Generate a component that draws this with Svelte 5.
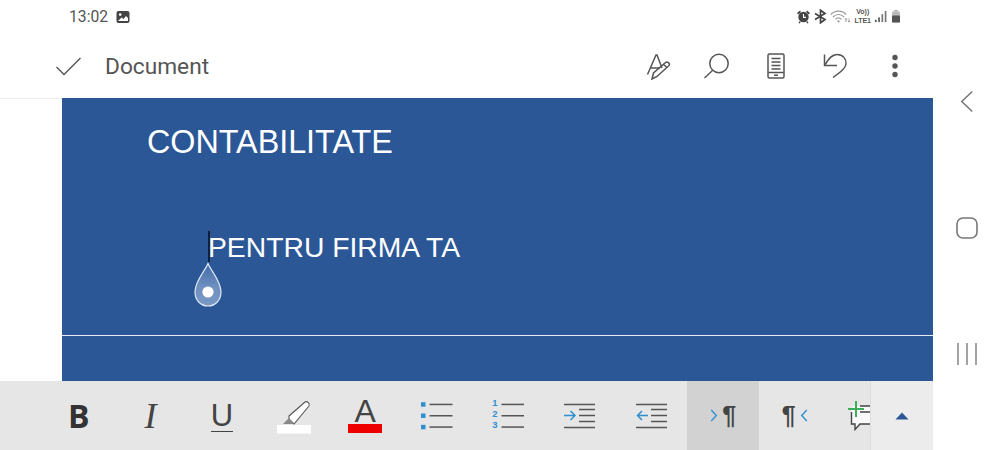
<script lang="ts">
	const lines = [0, 1, 2];
</script>

<div class="screen">
	<div class="main">
		<div class="status">
			<span class="time">13:02</span>
			<svg class="pic" width="14" height="14" viewBox="0 0 14 14">
				<rect x="0.5" y="1" width="13" height="12" rx="2" fill="#444" />
				<circle cx="4.2" cy="4.6" r="1.3" fill="#fff" />
				<path d="M2 11 L5.5 7.5 L7.5 9 L10 6 L12 8 V11 Z" fill="#fff" />
			</svg>
			<div class="sys">
				<svg width="15" height="15" viewBox="0 0 15 15" fill="#444">
					<circle cx="7.5" cy="8" r="5.2" />
					<path d="M1 4 L4 1.5 L5 3 L2.2 5.4 Z M14 4 L11 1.5 L10 3 L12.8 5.4 Z M3.5 12.2 L2.5 14 L3.6 14.4 L5 12.8 Z M11.5 12.2 L12.5 14 L11.4 14.4 L10 12.8 Z" />
					<path d="M7.5 5 V8.4 H10" stroke="#fff" stroke-width="1.1" fill="none" />
				</svg>
				<svg width="13" height="15" viewBox="0 0 13 15" fill="none" stroke="#444" stroke-width="1.7">
					<path d="M1 4.5 L11 10.5 L6.5 13.8 V1.2 L11 4.5 L1 10.5" />
				</svg>
				<svg class="wifi" width="21" height="15" viewBox="0 0 21 15" fill="none" stroke="#999" stroke-width="1.1">
					<path d="M0.8 5.5 C5 1 12 1 16.2 5.5 M3 8 C6.2 4.6 10.8 4.6 14 8 M5.4 10.4 C7.2 8.6 9.8 8.6 11.6 10.4" />
					<circle cx="8.5" cy="12.4" r="1.1" fill="#999" stroke="none" />
					<path d="M16 13 V9.5 M14.8 10.6 L16 9.4 L17.2 10.6 M19 9.5 V13 M17.9 12 L19 13.1 L20.1 12" stroke="#888" stroke-width="0.8" />
				</svg>
				<span class="volte"><span>Vo))</span><span>LTE1</span></span>
				<svg width="14" height="15" viewBox="0 0 15 15" fill="#555">
					<rect x="1" y="11" width="1.8" height="2.5" />
					<rect x="4.5" y="8.5" width="1.8" height="5" />
					<rect x="8" y="5" width="1.8" height="8.5" fill="#777" />
					<rect x="11.5" y="1.5" width="1.8" height="12" fill="#777" />
				</svg>
				<svg width="10" height="15" viewBox="0 0 10 15">
					<rect x="3.2" y="1" width="3.6" height="1.5" fill="#aaa" />
					<rect x="1" y="2.5" width="8" height="11" rx="1" fill="#bbb" />
					<rect x="1" y="6.5" width="8" height="7" rx="0.8" fill="#555" />
				</svg>
			</div>
		</div>

		<header class="appbar">
			<svg class="check" width="28" height="20" viewBox="0 0 28 20" fill="none" stroke="#555" stroke-width="1.4">
				<path d="M1.5 11 L9 18.5 L25.5 2" />
			</svg>
			<span class="doc-title">Document</span>
			<div class="actions">
				<span class="action">
					<svg width="28" height="28" viewBox="-1 0 28 28" fill="none" stroke="#555" stroke-width="1.5">
						<path d="M3.5 22.5 L12 3 H13 L18 16 M6.5 16 H16" />
						<path d="M8 27 L9.5 21 L21.5 10.5 C23 9 26.5 11.5 25 13.5 L13 24.5 Z M19.5 12.5 L23 15.5" />
					</svg>
				</span>
				<span class="action">
					<svg width="26" height="26" viewBox="1 0 26 26" fill="none" stroke="#555" stroke-width="1.5">
						<circle cx="16" cy="10.5" r="9.2" />
						<path d="M9.5 17.5 L1.5 25" />
					</svg>
				</span>
				<span class="action">
					<svg width="18" height="26" viewBox="0 0 18 26" fill="none" stroke="#555" stroke-width="1.5">
						<rect x="1" y="1" width="16" height="24" rx="1.5" />
						<path d="M4.5 5.5 H13.5 M4.5 9 H13.5 M4.5 12.5 H13.5 M4.5 16 H13.5 M1 19.5 H17 M7 22.3 H11" />
					</svg>
				</span>
				<span class="action">
					<svg width="26" height="26" viewBox="1 0 26 26" fill="none" stroke="#555" stroke-width="1.5">
						<path d="M2.5 1.5 V12.5 H15 M3 12 C7 5 10 1.5 15 1.5 C21 1.5 24.5 6 24 11 C23.5 15 20 18 11 24.5" />
					</svg>
				</span>
				<span class="action">
					<svg width="8" height="26" viewBox="0 0 8 26" fill="#555">
						<circle cx="4" cy="4.5" r="2.7" />
						<circle cx="4" cy="13" r="2.7" />
						<circle cx="4" cy="21.5" r="2.7" />
					</svg>
				</span>
			</div>
		</header>

		<div class="canvas">
			<div class="page">
				<div class="cover">
					<p class="heading">CONTABILITATE</p>
					<p class="sub">PENTRU FIRMA TA</p>
					<span class="caret"></span>
					<svg class="handle" width="30" height="46" viewBox="0 0 30 46">
						<defs>
							<linearGradient id="drop" x1="0" y1="0" x2="0" y2="1">
								<stop offset="0" stop-color="#3f69a6" />
								<stop offset="0.55" stop-color="#6f90c0" />
								<stop offset="1" stop-color="#7a98c6" />
							</linearGradient>
						</defs>
						<path d="M15 1.5 C12 9 2 19 2 30 C2 38 7.5 44 15 44 C22.5 44 28 38 28 30 C28 19 18 9 15 1.5 Z" fill="url(#drop)" stroke="#dfe8f5" stroke-width="1.2" />
						<circle cx="15" cy="30" r="5.6" fill="#fff" />
					</svg>
				</div>
			</div>
		</div>

		<div class="toolbar">
			<div class="tools">
				<button class="tool"><span class="bold">B</span></button>
				<button class="tool"><span class="ital">I</span></button>
				<button class="tool"><span class="under">U</span></button>
				<button class="tool">
					<svg width="36" height="36" viewBox="0 0 36 36">
						<path d="M13 18 L29 4 C31 2.5 34.5 6 33 8 L18 26 L13 22 Z" fill="#fff" stroke="#555" stroke-width="1.1" />
						<path d="M13 20 L7 26 H17 L18 25 Z" fill="#888" />
						<rect x="1" y="27" width="34" height="8.5" fill="#fff" />
					</svg>
				</button>
				<button class="tool fontcolor">
					<span class="a">A</span>
					<span class="bar"></span>
				</button>
				<button class="tool">
					<svg width="34" height="30" viewBox="0 0 34 30">
						{#each lines as i}
							<rect x="1" y={1.2 + i * 11.3} width="4.5" height="4.5" fill="#2f8fd0" />
							<rect x="9.5" y={2.7 + i * 11.3} width="23" height="1.5" fill="#555" />
						{/each}
					</svg>
				</button>
				<button class="tool numbered">
					<span class="nums">
						{#each lines as i}
							<span>{i + 1}</span>
						{/each}
					</span>
					<svg width="24" height="30" viewBox="0 0 24 30">
						{#each lines as i}
							<rect x="0.5" y={2.7 + i * 11.3} width="22.5" height="1.5" fill="#555" />
						{/each}
					</svg>
				</button>
				<button class="tool">
					<svg width="34" height="30" viewBox="0 0 34 30" fill="none">
						<path d="M1 3.5 H32 M16 8.5 H32 M16 14.5 H32 M16 20.5 H32 M1 26.5 H32" stroke="#555" stroke-width="1.5" />
						<path d="M1 14.5 H12 M7.5 10 L12 14.5 L7.5 19" stroke="#2f8fd0" stroke-width="1.5" />
					</svg>
				</button>
				<button class="tool">
					<svg width="34" height="30" viewBox="0 0 34 30" fill="none">
						<path d="M1 3.5 H32 M16 8.5 H32 M16 14.5 H32 M16 20.5 H32 M1 26.5 H32" stroke="#555" stroke-width="1.5" />
						<path d="M13 14.5 H2.5 M7 10 L2.5 14.5 L7 19" stroke="#2f8fd0" stroke-width="1.5" />
					</svg>
				</button>
				<button class="tool active">
					<svg width="8" height="13" viewBox="0 0 8 14" fill="none" stroke="#2f8fd0" stroke-width="1.5"><path d="M1 1 L6.5 7 L1 13" /></svg>
					<span class="pilcrow">¶</span>
				</button>
				<button class="tool">
					<span class="pilcrow">¶</span>
					<svg width="8" height="13" viewBox="0 0 8 14" fill="none" stroke="#2f8fd0" stroke-width="1.5"><path d="M7 1 L1.5 7 L7 13" /></svg>
				</button>
				<button class="tool comment">
					<svg width="22" height="30" viewBox="0 0 22 30">
						<path d="M5 5 H22 V23 H12 L7 28.5 V23 H3.5 V10 Z" fill="#fafafa" />
						<path d="M22 5 H12 M22 11 H12 M22 23 H12 L7 28.5 V23 H3.5 V11" fill="none" stroke="#444" stroke-width="1.4" />
						<path d="M8 0 V16 M0 8 H16" stroke="#3fae5a" stroke-width="2" />
					</svg>
				</button>
			</div>
			<button class="collapse">
				<svg width="14" height="8" viewBox="0 0 14 8"><path d="M7 0.5 L13.5 7.5 H0.5 Z" fill="#2b5797" /></svg>
			</button>
		</div>
	</div>

	<nav class="softkeys">
		<svg width="16" height="23" viewBox="0 0 16 24" fill="none" stroke="#777" stroke-width="1.6"><path d="M13.5 1.5 L2.5 12 L13.5 22.5" /></svg>
		<svg width="22" height="22" viewBox="0 0 22 22" fill="none" stroke="#777" stroke-width="1.6"><rect x="1" y="1" width="20" height="20" rx="6" /></svg>
		<svg width="22" height="22" viewBox="0 0 22 22" fill="none" stroke="#999" stroke-width="1.8"><path d="M2 0 V22 M11 0 V22 M20 0 V22" /></svg>
	</nav>
</div>

<style>
	:global(body) {
		margin: 0;
		background: #fff;
	}

	.screen {
		display: flex;
		width: 1000px;
		height: 450px;
		overflow: hidden;
		font-family: Roboto, sans-serif;
		color: #555;
	}

	.main {
		width: 933px;
		flex: none;
		display: flex;
		flex-direction: column;
	}

	.status {
		height: 33px;
		display: flex;
		align-items: center;
		padding-left: 69px;
		padding-right: 32px;
		box-sizing: border-box;
		flex: none;
	}

	.time {
		font-size: 15.7px;
		color: #555;
	}

	.pic {
		margin-left: 8px;
	}

	.sys {
		margin-left: auto;
		display: flex;
		align-items: center;
		gap: 3px;
	}

	.volte {
		display: flex;
		flex-direction: column;
		font: 700 7px/8.2px "Liberation Sans", sans-serif;
		text-align: center;
		color: #555;
	}

	.appbar {
		height: 65px;
		flex: none;
		display: flex;
		align-items: center;
		padding-left: 55px;
		padding-right: 8px;
		box-sizing: border-box;
	}

	.doc-title {
		font-size: 22.7px;
		margin-left: 22px;
		margin-top: 1px;
		color: #555;
	}

	.actions {
		margin-left: auto;
		display: flex;
		align-items: center;
	}

	.action {
		width: 59.5px;
		display: flex;
		align-items: center;
		justify-content: center;
	}

	.canvas {
		flex: 1;
		min-height: 0;
		padding-left: 62px;
		background: #fff;
		box-shadow: inset 0 1px 0 #ececec;
	}

	.page {
		height: 100%;
		background: #2b5797;
		overflow: hidden;
	}

	.cover {
		position: relative;
		height: 237px;
		border-bottom: 1px solid #e6ecf5;
		color: #fff;
		font-family: "Liberation Sans", Arial, sans-serif;
	}

	.heading {
		margin: 0;
		padding: 24px 0 0 85px;
		font-size: 32.3px;
		line-height: 40px;
	}

	.sub {
		margin: 0;
		padding: 68px 0 0 146px;
		font-size: 28.3px;
		line-height: 34px;
	}

	.caret {
		position: absolute;
		left: 146px;
		top: 133px;
		width: 2px;
		height: 31px;
		background: #10203c;
	}

	.handle {
		position: absolute;
		left: 131px;
		top: 164px;
	}

	.toolbar {
		height: 69px;
		flex: none;
		display: flex;
		background: #e6e6e6;
	}

	.tools {
		width: 871px;
		flex: none;
		display: flex;
		padding-left: 43px;
		box-sizing: border-box;
		overflow: hidden;
		border-right: 1px solid #dcdcdc;
	}

	button {
		border: 0;
		padding: 0;
		margin: 0;
		background: none;
		color: #444;
		font-family: inherit;
	}

	.tool {
		width: 71.6px;
		flex: none;
		display: flex;
		align-items: center;
		justify-content: center;
		gap: 4px;
	}

	.active {
		background: #d2d2d2;
	}

	.bold {
		font: 700 32px "Open Sans", sans-serif;
		color: #333;
	}

	.ital {
		font: italic 36px "Liberation Serif", serif;
		color: #444;
	}

	.under {
		font: 31px "Liberation Sans", sans-serif;
		color: #444;
		border-bottom: 1.5px solid #444;
		line-height: 31px;
	}

	.fontcolor {
		flex-direction: column;
		gap: 0;
	}

	.a {
		font: 32px "Liberation Sans", sans-serif;
		line-height: 26px;
		color: #444;
	}

	.bar {
		width: 34px;
		height: 9px;
		background: #ee0000;
	}

	.numbered {
		gap: 3px;
	}

	.nums {
		display: flex;
		flex-direction: column;
		font: 700 9.5px/11.3px "Liberation Sans", sans-serif;
		color: #2f8fd0;
		text-align: center;
		padding-bottom: 4px;
	}

	.pilcrow {
		font: 700 25px "Liberation Sans", sans-serif;
		color: #444;
	}

	.comment {
		justify-content: flex-end;
		width: 39px;
	}

	.collapse {
		flex: 1;
		display: flex;
		align-items: center;
		justify-content: center;
		background: #ececec;
	}

	.softkeys {
		flex: 1;
		display: flex;
		flex-direction: column;
		align-items: center;
		justify-content: space-between;
		padding: 90px 0 85px;
		box-sizing: border-box;
		height: 450px;
		background: #fff;
	}
</style>
